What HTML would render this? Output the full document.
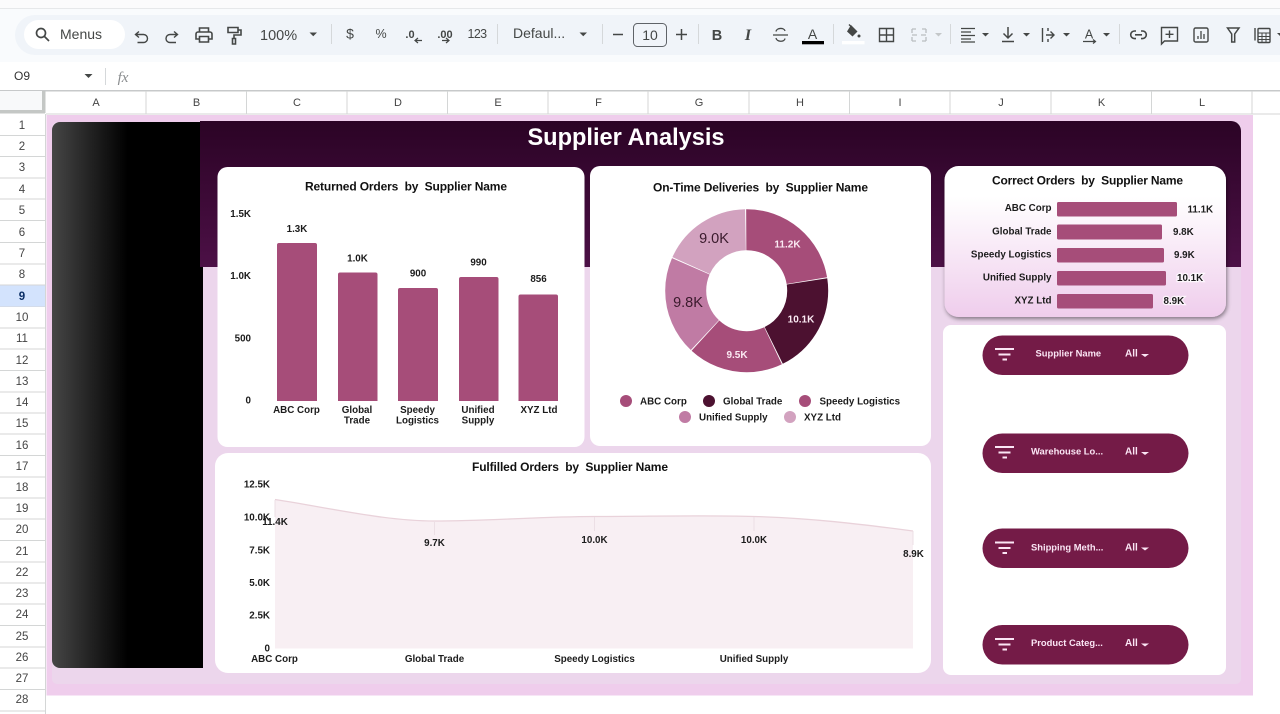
<!DOCTYPE html>
<html><head><meta charset="utf-8"><title>Supplier Analysis</title>
<style>
html,body{margin:0;padding:0;background:#fff;width:1280px;height:714px;overflow:hidden}
svg{display:block;font-family:"Liberation Sans",sans-serif}
.ic{fill:none;stroke:#444746;stroke-width:1.4}
.car{fill:#444746;stroke:none}
.tb{fill:#444746;font-size:14px}
.col{fill:#444;font-size:11px;text-anchor:middle}
.row{fill:#444;font-size:11.5px;text-anchor:middle}
.b{font-weight:bold;fill:#1c1c1c;font-size:9.8px}
.m{text-anchor:middle}
.e{text-anchor:end}
.t{font-weight:bold;fill:#111;font-size:12px;text-anchor:middle;white-space:pre}
.f{font-weight:bold;fill:#fbe6f5;font-size:9.4px}
.grid{stroke:#d4d6d6;stroke-width:1}
.h{stroke:#fff;stroke-width:2.5px;paint-order:stroke;stroke-opacity:.75}
</style></head><body>
<svg width="1280" height="714" viewBox="0 0 1280 714" xmlns="http://www.w3.org/2000/svg">
<defs>
<linearGradient id="hd" x1="0" y1="0" x2="0" y2="1"><stop offset="0" stop-color="#2b0325"/><stop offset="1" stop-color="#4c1046"/></linearGradient>
<linearGradient id="bk" x1="0" y1="0" x2="1" y2="0"><stop offset="0" stop-color="#464646"/><stop offset=".5" stop-color="#000"/><stop offset="1" stop-color="#000"/></linearGradient>
<linearGradient id="cc" x1="0" y1="0" x2="0" y2="1"><stop offset="0" stop-color="#fff"/><stop offset=".2" stop-color="#fff"/><stop offset="1" stop-color="#efcdec"/></linearGradient>
<filter id="sh" x="-10%" y="-10%" width="120%" height="125%"><feDropShadow dx="1" dy="2" stdDeviation="2" flood-color="#000" flood-opacity=".45"/></filter>
</defs>

<!-- chrome top -->
<rect width="1280" height="714" fill="#fff"/>
<rect x="0" y="0" width="1280" height="8" fill="#fbfbfc"/>
<rect x="0" y="8" width="1280" height="1" fill="#e6e8ea"/>
<rect x="0" y="9" width="1280" height="53" fill="#f9fbfd"/>
<rect x="15" y="15" width="1290" height="40" rx="20" fill="#f0f4f9"/>
<rect x="24" y="20" width="101" height="29" rx="14.5" fill="#fff"/>
<circle cx="41" cy="33" r="4.500" class="ic" style="stroke-width:1.700"/><path d="M44.500 36.500L49 41" class="ic" style="stroke-width:1.700"/>
<text x="60" y="39" class="tb">Menus</text>
<path d="M139 31.500l-3.500 3 3.500 3M136 34.500h7.500a4 4 0 0 1 0 8h-6" class="ic"/>
<path d="M174 31.500l3.500 3-3.500 3M177 34.500h-7a4 4 0 0 0 0 8h6" class="ic"/>
<path d="M199.500 32v-4h9v4M199 39h-3v-5a2 2 0 0 1 2-2h12a2 2 0 0 1 2 2v5h-3M199.500 36.500h9v5.500h-9z" class="ic" style="stroke-width:1.600"/>
<path d="M228 27.500h10v5h-10zM238 30h3v5h-7v3.500M232.500 38.500h3v5.500h-3z" class="ic" style="stroke-width:1.600"/>
<text x="260" y="40" class="tb" style="font-size:14.500px">100%</text>
<path d="M309.500 32.500h7.500l-3.750 3.700z" class="car"/>
<rect x="331" y="24" width="1" height="20" fill="#d5d8da"/>
<text x="350" y="38.500" class="tb m" style="font-size:14px">$</text>
<text x="381" y="38" class="tb m" style="font-size:12.500px">%</text>
<text x="410" y="38" class="tb m" font-weight="bold" style="font-size:11px">.0</text><path d="M422 40.500h-7M418 38l-3 2.500 3 2.500" class="ic" style="stroke-width:1.200"/>
<text x="445" y="38" class="tb m" font-weight="bold" style="font-size:11px">.00</text><path d="M442 40.500h7M446 38l3 2.500-3 2.500" class="ic" style="stroke-width:1.200"/>
<text x="477" y="38" class="tb m" style="font-size:12.500px;letter-spacing:-.6px">123</text>
<rect x="497" y="24" width="1" height="20" fill="#d5d8da"/>
<text x="513" y="38" class="tb" style="font-size:14px">Defaul...</text>
<path d="M579.500 32.500h7.500l-3.750 3.700z" class="car"/>
<rect x="602" y="24" width="1" height="20" fill="#d5d8da"/>
<path d="M613 34.500h10" class="ic" style="stroke-width:1.500"/>
<rect x="633.500" y="23.500" width="33" height="23" rx="4" fill="none" stroke="#5f6368"/>
<text x="650" y="40" class="tb m" style="font-size:14px">10</text>
<path d="M676 34.500h11M681.500 29v11" class="ic" style="stroke-width:1.500"/>
<rect x="698" y="24" width="1" height="20" fill="#d5d8da"/>
<text x="717" y="40" class="tb m" font-weight="bold" style="font-size:14.500px">B</text>
<text x="748" y="40" class="tb m" font-weight="bold" font-style="italic" style="font-family:'Liberation Serif',serif;font-size:16px">I</text>
<path d="M773 35h15M776 31.500c.5-4 8.500-4 9-.5M776 38c.5 4 8.500 4.500 9 .5" class="ic" style="stroke-width:1.300"/>
<text x="812.500" y="39" class="tb m" style="font-size:14px">A</text>
<rect x="802" y="41" width="22" height="3.300" fill="#000"/>
<rect x="833" y="24" width="1" height="20" fill="#d5d8da"/>
<path d="M851 25l6.500 6.500-5 5-5.500-5z" fill="#444746"/><path d="M849 24.500l3 3" class="ic"/><circle cx="859" cy="36" r="1.500" fill="#444746"/>
<rect x="842" y="41" width="22.500" height="3.300" fill="#fff"/>
<path d="M879.500 28.500h14v13h-14zM886.500 28.500v13M879.500 35h14" class="ic"/>
<path d="M912 29v4M912 37v4M926 29v4M926 37v4M912 29h4M912 41h4M922 29h4M922 41h4M912 35h5M921 35h5" class="ic" style="stroke:#b9bdc0;stroke-width:1.300"/>
<path d="M935 33h7l-3.500 3.500z" fill="#c4c7c9"/>
<rect x="950" y="24" width="1" height="20" fill="#d5d8da"/>
<path d="M961 28.500h14M961 32h10M961 35.500h14M961 39h10M961 42h14" class="ic" style="stroke-width:1.200"/>
<path d="M982 33h7l-3.500 3.500z" class="car"/>
<path d="M1008 27v11M1003.500 33.500l4.500 4.500 4.500-4.500M1002 41.500h12" class="ic" style="stroke-width:1.500"/>
<path d="M1023 33h7l-3.500 3.500z" class="car"/>
<path d="M1042.500 28v14M1046 35h8M1050.500 31.500l3.500 3.500-3.500 3.500M1048 28v3M1048 39v3" class="ic"/>
<path d="M1063 33h7l-3.500 3.500z" class="car"/>
<text x="1089" y="38.500" class="tb m" style="font-size:12.500px">A</text><path d="M1083 41.500h12M1093 39.500l2.500 2-2.500 2" class="ic" style="stroke-width:1.200"/>
<path d="M1103 33h7l-3.500 3.500z" class="car"/>
<rect x="1119" y="24" width="1" height="20" fill="#d5d8da"/>
<path d="M1136 31h-1.500a3.800 3.800 0 0 0 0 7.600h1.500M1141 31h1.500a3.800 3.800 0 0 1 0 7.600h-1.500M1135 34.800h7" class="ic" style="stroke-width:1.600"/>
<path d="M1161.500 27.500h16v13.500h-13l-3 3zM1169.500 30.500v7.500M1165.500 34.300h8" class="ic"/>
<rect x="1194" y="28" width="14" height="14" rx="1.500" class="ic"/><path d="M1198 39v-3M1201 39v-8M1204 39v-5" class="ic" style="stroke-width:1.300"/>
<path d="M1227.500 28h11.500l-4.300 6v8h-3v-8z" class="ic" style="stroke-width:1.500"/>
<path d="M1255 28v12.500" class="ic"/><rect x="1258" y="28.500" width="12" height="14" rx="1" class="ic"/><path d="M1258 33h12M1258 36.500h12M1258 39.500h12M1262 33v9M1266 33v9" class="ic" style="stroke-width:1"/>
<path d="M1277 33h7l-3.500 3.500z" class="car"/>

<!-- name box -->
<rect x="0" y="62" width="1280" height="28" fill="#fff"/>
<text x="14" y="80" fill="#333" style="font-size:12px">O9</text>
<path d="M84.500 74h8l-4 4z" class="car"/>
<rect x="105" y="68" width="1" height="17" fill="#d5d8da"/>
<text x="123" y="82" fill="#8a8d8f" font-style="italic" text-anchor="middle" style="font-family:'Liberation Serif',serif;font-size:15px">fx</text>

<!-- headers -->
<rect x="0" y="90" width="1280" height="1.500" fill="#c7c9ca"/>
<rect x="0" y="91" width="42" height="19" fill="#f8f9fa"/>
<rect x="42" y="91" width="3.500" height="22" fill="#c4c7c5"/>
<rect x="0" y="110" width="45" height="3.500" fill="#c4c7c5"/>
<g class="grid">
<path d="M146 91v23M246.500 91v23M347 91v23M447.500 91v23M548 91v23M648 91v23M749 91v23M849.500 91v23M950 91v23M1051 91v23M1151.500 91v23M1252 91v23"/>
<path d="M46 114h1234"/>
<path d="M45.500 114v600"/>
<path d="M0 135.500h45M0 156.500h45M0 178h45M0 199h45M0 220.500h45M0 242.500h45M0 264h45M0 285h45M0 306.500h45M0 328h45M0 349h45M0 370.500h45M0 392h45M0 413h45M0 434h45M0 455.500h45M0 477h45M0 498h45M0 519h45M0 540.500h45M0 562h45M0 583h45M0 604h45M0 625.500h45M0 647h45M0 668h45M0 689.500h45M0 711h45"/>
</g>
<g class="col">
<text x="96" y="106">A</text><text x="196.500" y="106">B</text><text x="297" y="106">C</text><text x="398" y="106">D</text><text x="498" y="106">E</text><text x="598.500" y="106">F</text><text x="699" y="106">G</text><text x="800" y="106">H</text><text x="900" y="106">I</text><text x="1001" y="106">J</text><text x="1101.500" y="106">K</text><text x="1202" y="106">L</text>
</g>
<rect x="0" y="285.500" width="45" height="21" fill="#d3e3fd"/>
<g class="row">
<text x="22" y="129">1</text><text x="22" y="150">2</text><text x="22" y="171">3</text><text x="22" y="193">4</text><text x="22" y="214">5</text><text x="22" y="236">6</text><text x="22" y="257">7</text><text x="22" y="278">8</text><text x="22" y="300" font-weight="bold" fill="#0b2f66">9</text><text x="22" y="321">10</text><text x="22" y="342">11</text><text x="22" y="364">12</text><text x="22" y="385">13</text><text x="22" y="406">14</text><text x="22" y="427">15</text><text x="22" y="449">16</text><text x="22" y="470">17</text><text x="22" y="491">18</text><text x="22" y="512">19</text><text x="22" y="533">20</text><text x="22" y="555">21</text><text x="22" y="576">22</text><text x="22" y="597">23</text><text x="22" y="618">24</text><text x="22" y="640">25</text><text x="22" y="661">26</text><text x="22" y="682">27</text><text x="22" y="703">28</text>
</g>

<!-- dashboard -->
<rect x="46.500" y="115" width="1206.500" height="580.500" fill="#efcdec"/>
<rect x="52" y="122" width="1189" height="562" rx="5" fill="#ecd6ec"/>
<path d="M60 122H203V668H60a8 8 0 0 1-8-8V130a8 8 0 0 1 8-8z" fill="url(#bk)"/>
<path d="M200 121H1231a10 10 0 0 1 10 10V267H200z" fill="url(#hd)"/>
<text x="626" y="145" fill="#fff" font-weight="bold" text-anchor="middle" style="font-size:23.600px">Supplier Analysis</text>

<!-- card 1 -->
<rect x="217.500" y="167" width="367" height="280" rx="10" fill="#fff"/>
<text x="406" y="190.500" class="t" textLength="202" lengthAdjust="spacing">Returned Orders  by  Supplier Name</text>
<g class="b e">
<text x="251" y="217">1.5K</text><text x="251" y="279">1.0K</text><text x="251" y="341.500">500</text><text x="251" y="403.500">0</text>
</g>
<g fill="#a64d79">
<path d="M277 401V245a2 2 0 0 1 2-2h36a2 2 0 0 1 2 2V401z"/>
<path d="M338 401V274.500a2 2 0 0 1 2-2h35.500a2 2 0 0 1 2 2V401z"/>
<path d="M398 401V290a2 2 0 0 1 2-2h36a2 2 0 0 1 2 2V401z"/>
<path d="M459 401V279a2 2 0 0 1 2-2h35.500a2 2 0 0 1 2 2V401z"/>
<path d="M518.500 401V296.500a2 2 0 0 1 2-2h35.500a2 2 0 0 1 2 2V401z"/>
</g>
<g class="b m">
<text x="297" y="232">1.3K</text><text x="357.500" y="261.500">1.0K</text><text x="418" y="276.500">900</text><text x="478.500" y="265.500">990</text><text x="538.500" y="282">856</text>
<text x="296.500" y="413">ABC Corp</text>
<text x="357" y="413">Global</text><text x="357" y="423.500">Trade</text>
<text x="417.500" y="413">Speedy</text><text x="417.500" y="423.500">Logistics</text>
<text x="478" y="413">Unified</text><text x="478" y="423.500">Supply</text>
<text x="539" y="413">XYZ Ltd</text>
</g>

<!-- card 2 -->
<rect x="590" y="166" width="341" height="280" rx="10" fill="#fff"/>
<text x="760.500" y="191.500" class="t" textLength="215" lengthAdjust="spacing">On-Time Deliveries  by  Supplier Name</text>
<g fill="none" stroke-width="41" transform="rotate(-90 746.700 290.700)">
<circle cx="746.700" cy="290.700" r="61" stroke="#a64d79" pathLength="496" stroke-dasharray="111 385" stroke-dashoffset="0"/>
<circle cx="746.700" cy="290.700" r="61" stroke="#4c1130" pathLength="496" stroke-dasharray="100 396" stroke-dashoffset="-112"/>
<circle cx="746.700" cy="290.700" r="61" stroke="#a64d79" pathLength="496" stroke-dasharray="94 402" stroke-dashoffset="-213"/>
<circle cx="746.700" cy="290.700" r="61" stroke="#c07ba4" pathLength="496" stroke-dasharray="97 399" stroke-dashoffset="-308"/>
<circle cx="746.700" cy="290.700" r="61" stroke="#d2a2bf" pathLength="496" stroke-dasharray="89 407" stroke-dashoffset="-406"/>
</g>
<g font-weight="bold" fill="#fbeaf3" text-anchor="middle" style="font-size:10px">
<text x="787.500" y="247.500">11.2K</text><text x="801" y="322.500">10.1K</text><text x="737" y="358">9.5K</text>
</g>
<g fill="#3a1a2c" text-anchor="middle" style="font-size:14.500px">
<text x="688" y="307">9.8K</text><text x="714" y="243">9.0K</text>
</g>
<circle cx="626" cy="401" r="6" fill="#a64d79"/><circle cx="709" cy="401" r="6" fill="#4c1130"/><circle cx="805" cy="401" r="6" fill="#a64d79"/>
<circle cx="685" cy="417" r="6" fill="#c07ba4"/><circle cx="790" cy="417" r="6" fill="#d2a2bf"/>
<g class="b">
<text x="640" y="404.500">ABC Corp</text><text x="723" y="404.500">Global Trade</text><text x="819.500" y="404.500">Speedy Logistics</text>
<text x="699" y="420.500">Unified Supply</text><text x="804" y="420.500">XYZ Ltd</text>
</g>

<!-- card 3 -->
<rect x="944.500" y="166" width="281.500" height="151" rx="14" fill="url(#cc)" filter="url(#sh)"/>
<text x="1087.500" y="184.500" class="t" textLength="191" lengthAdjust="spacing">Correct Orders  by  Supplier Name</text>
<g class="b e">
<text x="1051.500" y="211">ABC Corp</text><text x="1051.500" y="234.500">Global Trade</text><text x="1051.500" y="257.500">Speedy Logistics</text><text x="1051.500" y="280.500">Unified Supply</text><text x="1051.500" y="303.500">XYZ Ltd</text>
</g>
<g fill="#a64d79">
<rect x="1057" y="202" width="120" height="14.500" rx="1.500"/>
<rect x="1057" y="224.500" width="105" height="15" rx="1.500"/>
<rect x="1057" y="248" width="107" height="14.500" rx="1.500"/>
<rect x="1057" y="271" width="109" height="14.500" rx="1.500"/>
<rect x="1057" y="294" width="96" height="14.500" rx="1.500"/>
</g>
<g class="b">
<text x="1187.500" y="212.500">11.1K</text><text x="1173" y="235">9.8K</text><text x="1174" y="258">9.9K</text><text x="1177" y="281" class="h">10.1K</text><text x="1163.500" y="304" class="h">8.9K</text>
</g>

<!-- card 4 -->
<rect x="943" y="325" width="283" height="350" rx="8" fill="#fff"/>
<g fill="#741b47">
<rect x="982.500" y="335.500" width="206" height="39.500" rx="19.750"/>
<rect x="982.500" y="433.500" width="206" height="39.500" rx="19.750"/>
<rect x="982.500" y="528.500" width="206" height="39.500" rx="19.750"/>
<rect x="982.500" y="625" width="206" height="39.500" rx="19.750"/>
</g>
<g fill="#fbe6f5">
<path d="M995 348h19v2h-19zM998.500 353.500h12v2h-12zM1002.500 358.500h4.500v2h-4.500z"/>
<path d="M995 446h19v2h-19zM998.500 451.500h12v2h-12zM1002.500 456.500h4.500v2h-4.500z"/>
<path d="M995 541.500h19v2h-19zM998.500 547h12v2h-12zM1002.500 552h4.500v2h-4.500z"/>
<path d="M995 638h19v2h-19zM998.500 643.500h12v2h-12zM1002.500 648.500h4.500v2h-4.500z"/>
<path d="M1141 354h8l-4 3z"/><path d="M1141 452h8l-4 3z"/><path d="M1141 547.500h8l-4 3z"/><path d="M1141 643.500h8l-4 3z"/>
</g>
<g class="f">
<text x="1035.500" y="356.500">Supplier Name</text><text x="1125" y="356.500" style="font-size:10px">All</text>
<text x="1031" y="454.500">Warehouse Lo...</text><text x="1125" y="454.500" style="font-size:10px">All</text>
<text x="1031" y="550.500">Shipping Meth...</text><text x="1125" y="550.500" style="font-size:10px">All</text>
<text x="1031" y="646">Product Categ...</text><text x="1125" y="646" style="font-size:10px">All</text>
</g>

<!-- card 5 -->
<rect x="215" y="453" width="716" height="220" rx="13" fill="#fff"/>
<text x="570" y="471" class="t" textLength="196" lengthAdjust="spacing">Fulfilled Orders  by  Supplier Name</text>
<path d="M275 499.500C330 508 385 521 434.500 521C490 521 540 516.500 594.500 516.500C650 516.500 700 515 754 516.500C810 518 860 524 913 531V648.500H275z" fill="#f8eff3"/>
<path d="M275 499.500C330 508 385 521 434.500 521C490 521 540 516.500 594.500 516.500C650 516.500 700 515 754 516.500C810 518 860 524 913 531" fill="none" stroke="#e9d2da" stroke-width="1.300"/>
<path d="M275 500v17M434.500 521v14M594.500 517v14M754 517v14M913 531v14" stroke="#ecdfe5" stroke-width="1" fill="none"/>
<g class="b e">
<text x="270" y="487.500">12.5K</text><text x="270" y="520.500">10.0K</text><text x="270" y="553.500">7.5K</text><text x="270" y="586">5.0K</text><text x="270" y="618.500">2.5K</text><text x="270" y="651.500">0</text>
</g>
<g class="b m">
<text x="275" y="525">11.4K</text><text x="434.500" y="546">9.7K</text><text x="594.500" y="543">10.0K</text><text x="754" y="543">10.0K</text><text x="913.500" y="557">8.9K</text>
<text x="274.500" y="662">ABC Corp</text><text x="434.500" y="662">Global Trade</text><text x="594.500" y="662">Speedy Logistics</text><text x="754" y="662">Unified Supply</text>
</g>
</svg>
</body></html>
